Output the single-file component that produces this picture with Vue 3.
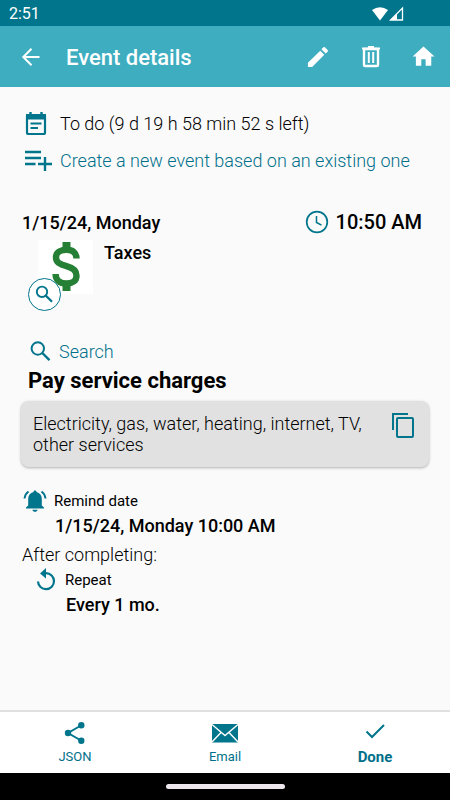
<script setup>
const statusLine = 'To do (9 d 19 h 58 min 52 s left)'
const note = 'Electricity, gas, water, heating, internet, TV, other services'
</script>

<template>
  <div class="screen">
    <div class="status">
      <span>2:51</span>
      <div class="signals">
        <svg width="18" height="14" viewBox="0 0 18 14"><path d="M0 3Q8-2.600 16 3L8 13.500Z" fill="#fff" /></svg>
        <svg width="14" height="14" viewBox="0 0 14 14"><path d="M12.500 1V13H0.500Z" fill="none" stroke="#fff" stroke-width="1.300" /><path d="M7 6.500V13H0.500Z" fill="#fff" /></svg>
      </div>
    </div>

    <header class="bar">
      <button class="icon-btn" aria-label="Back">
        <svg width="24" height="24" viewBox="0 0 24 24"><path d="M21.500 12H5M13.500 3.800L5.300 12L13.500 20.200" fill="none" stroke="#fff" stroke-width="2" /></svg>
      </button>
      <h1>Event details</h1>
      <div class="actions">
        <button class="icon-btn" aria-label="Edit">
          <svg width="26" height="26" viewBox="0 0 24 24"><path fill="#fff" d="M2.700 17.250V21.300h3.900L17.810 9.940l-3.750-3.750zM20.910 7.040a1 1 0 0 0 0-1.410l-2.540-2.540a1 1 0 0 0-1.410 0l-1.830 1.830 3.950 3.950 1.830-1.830z" /></svg>
        </button>
        <button class="icon-btn" aria-label="Delete">
          <svg width="26" height="26" viewBox="0 0 26 26"><path d="M4 4.500H22M10 3H16" fill="none" stroke="#fff" stroke-width="2.200" /><rect x="6" y="5" width="14" height="17" rx="1" fill="none" stroke="#fff" stroke-width="2.400" /><path d="M10.800 8V19M15.200 8V19" stroke="#fff" stroke-width="2" /></svg>
        </button>
        <button class="icon-btn" aria-label="Home">
          <svg width="26" height="26" viewBox="0 0 24 24"><path fill="#fff" d="M9.500 20v-6h4v6h5.200v-8.500h3L11.500 2.200 1.500 11.500h3v8.500z" /></svg>
        </button>
      </div>
    </header>

    <main class="content">
      <div class="line">
        <svg width="28" height="28" viewBox="0 0 28 28"><path d="M9.500 2V5M20.500 2V5" stroke="#00758c" stroke-width="2.400" /><rect x="6" y="5" width="18" height="19" rx="1.500" fill="none" stroke="#00758c" stroke-width="2.200" /><path d="M5 4H25V9.500H5Z" fill="#00758c" /><path d="M9.500 13.500H20.500M9.500 18H17" stroke="#00758c" stroke-width="2.200" /></svg>
        <span>{{ statusLine }}</span>
      </div>
      <a class="line link" href="#new">
        <svg width="28" height="28" viewBox="0 0 28 28"><path d="M4 5H20M4 11H20M4 17H14.500M17 17H31M24 10V24" fill="none" stroke="#00758c" stroke-width="2.400" /></svg>
        <span>Create a new event based on an existing one</span>
      </a>

      <div class="when">
        <strong>1/15/24, Monday</strong>
        <span class="time">
          <svg width="24" height="24" viewBox="0 0 24 24"><circle cx="12" cy="12" r="10.300" fill="none" stroke="#00758c" stroke-width="1.700" /><path d="M11.500 6V12.500L16.500 15.200" fill="none" stroke="#00758c" stroke-width="1.500" /></svg>
          <strong>10:50 AM</strong>
        </span>
      </div>

      <div class="category">
        <div class="thumb">
          <svg width="55" height="54" viewBox="0 0 55 54">
            <path d="M24.500 2H32.500V11H24.500ZM24.500 43H32.500V51H24.500Z" fill="#257f35" />
            <path d="M38.500 18.500C38.500 12.500 34.500 9.700 28.500 9.700C22.500 9.700 18 12.500 18 17.200C18 22.500 22 24.500 28.500 26.200C35.500 28 38.500 31 38.500 35.700C38.500 40.800 34.500 43.500 28.500 43.500C21.500 43.500 17.600 40 17.600 34" fill="none" stroke="#257f35" stroke-width="6.400" />
          </svg>
          <button class="zoom" aria-label="Zoom picture">
            <svg width="20" height="20" viewBox="0 0 20 20"><circle cx="7" cy="6.800" r="5.200" fill="none" stroke="#00758c" stroke-width="1.900" /><path d="M10.800 10.600L17 16.800" stroke="#00758c" stroke-width="2.200" /></svg>
          </button>
        </div>
        <strong>Taxes</strong>
      </div>

      <a class="search" href="#search">
        <svg width="22" height="22" viewBox="0 0 22 22"><circle cx="8.800" cy="8.500" r="6.200" fill="none" stroke="#00758c" stroke-width="2" /><path d="M13.300 13L20.500 20.200" stroke="#00758c" stroke-width="2.400" /></svg>
        <span>Search</span>
      </a>
      <h2>Pay service charges</h2>

      <section class="card">
        <p>{{ note }}</p>
        <button class="icon-btn" aria-label="Copy">
          <svg width="24" height="26" viewBox="0 0 24 26"><path d="M2 17V1H17" fill="none" stroke="#00758c" stroke-width="2" /><rect x="6" y="5" width="16" height="19" rx="1" fill="none" stroke="#00758c" stroke-width="2" /></svg>
        </button>
      </section>

      <div class="remind">
        <svg width="24" height="24" viewBox="0 0 24 24"><path d="M12 1.500C13 1.500 13.500 2 13.500 3C17 4 18.800 6.500 18.800 10V16.500L21 18.500V19.500H3V18.500L5.200 16.500V10C5.200 6.500 7 4 10.500 3C10.500 2 11 1.500 12 1.500ZM9.500 20.700H14.500C14.500 23.500 9.500 23.500 9.500 20.700Z" fill="#00758c" /><path d="M5.500 2.500Q2 5 1.500 9.500M18.500 2.500Q22 5 22.500 9.500" fill="none" stroke="#00758c" stroke-width="1.900" /></svg>
        <span>Remind date</span>
      </div>
      <strong class="remind-value">1/15/24, Monday 10:00 AM</strong>
      <p class="after">After completing:</p>
      <div class="repeat">
        <svg width="22" height="22" viewBox="0 0 22 22"><path d="M9 4.200H11A8 8 0 1 1 3 12.500" fill="none" stroke="#00758c" stroke-width="2.200" /><path d="M11 -1V9.500L5 4.500Z" fill="#00758c" /></svg>
        <span>Repeat</span>
      </div>
      <strong class="repeat-value">Every 1 mo.</strong>
    </main>

    <nav class="tabs">
      <button>
        <svg width="24" height="24" viewBox="0 0 24 24"><path d="M18 4.500L5 12L18 19.500" fill="none" stroke="#00758c" stroke-width="2" /><g fill="#00758c"><circle cx="18.300" cy="4.300" r="3.200" /><circle cx="5" cy="12" r="3.200" /><circle cx="18.300" cy="19.700" r="3.200" /></g></svg>
        <span>JSON</span>
      </button>
      <button>
        <svg width="28" height="24" viewBox="0 0 28 24"><rect x="1" y="3" width="26" height="18.500" fill="#00758c" /><path d="M1 3.500L14 14.500L27 3.500M1 21L10 11.500M27 21L18 11.500" fill="none" stroke="#fff" stroke-width="1.400" /></svg>
        <span>Email</span>
      </button>
      <button class="done">
        <svg width="24" height="24" viewBox="0 0 24 24"><path d="M3.500 10.500L9 16L21 4" fill="none" stroke="#00758c" stroke-width="2" /></svg>
        <span>Done</span>
      </button>
    </nav>
    <div class="gesture"><span></span></div>
  </div>
</template>

<style>
body {
  background: #fafafa;
}
</style>

<style scoped>
.screen {
  display: flex;
  flex-direction: column;
  min-height: 100vh;
  background: #fafafa;
  color: #000;
  font-family: Roboto, "Liberation Sans", sans-serif;
  font-size: 18px;
}
svg {
  display: block;
  flex: none;
  overflow: visible;
}
button {
  padding: 0;
  border: 0;
  background: none;
  font: inherit;
}
a {
  text-decoration: none;
}
h1, h2, p {
  margin: 0;
}
strong {
  font-weight: 500;
}
.status {
  display: flex;
  align-items: center;
  justify-content: space-between;
  height: 26px;
  padding: 1px 46px 0 9px;
  box-sizing: border-box;
  background: #00758c;
  color: #fff;
  font-size: 16px;
}
.signals {
  display: flex;
}
.bar {
  display: flex;
  align-items: center;
  height: 61px;
  padding: 0 13px 0 18px;
  background: #3eadbf;
  color: #fff;
}
h1 {
  margin-left: 24px;
  font-size: 22px;
  font-weight: 500;
  line-height: 30px;
  padding-top: 2px;
}
.actions {
  display: flex;
  gap: 27px;
  margin-left: auto;
}
.content {
  display: flex;
  flex: 1;
  flex-direction: column;
  padding: 18px 21px 0;
}
.line {
  display: flex;
  align-items: center;
  gap: 11px;
  height: 37px;
  color: #000;
  font-weight: 300;
}
.link, .search {
  color: #00708a;
}
.when {
  display: flex;
  align-items: center;
  justify-content: space-between;
  height: 28px;
  margin-top: 29px;
  padding: 0 7px 0 1px;
}
.time {
  display: flex;
  align-items: center;
  gap: 7px;
}
.time strong {
  font-size: 20px;
}
.category {
  display: flex;
  gap: 11px;
  margin-top: 4px;
  padding-left: 17px;
  line-height: 26px;
}
.thumb {
  position: relative;
  background: #fff;
}
.zoom {
  position: absolute;
  left: -10px;
  bottom: -17px;
  display: grid;
  place-items: center;
  width: 33px;
  height: 33px;
  border: 1px solid #00758c;
  border-radius: 50%;
  background: #fff;
}
.search {
  display: flex;
  align-items: center;
  gap: 8px;
  height: 24px;
  margin-top: 45px;
  padding-left: 8px;
  font-weight: 300;
}
h2 {
  margin-top: 4px;
  padding-left: 7px;
  font-size: 22px;
  font-weight: 700;
  line-height: 28px;
}
.card {
  display: flex;
  align-items: flex-start;
  justify-content: space-between;
  gap: 20px;
  margin-top: 6px;
  padding: 12px 14px 12px 12px;
  border-radius: 8px;
  background: #e1e1e1;
  box-shadow: 0 1px 3px rgba(0, 0, 0, 0.3);
  font-weight: 300;
  line-height: 21px;
}
.remind, .repeat {
  display: flex;
  align-items: center;
  font-size: 15px;
  font-weight: 400;
}
.remind {
  gap: 7px;
  height: 26px;
  margin-top: 21px;
  padding-left: 2px;
}
.remind-value {
  padding-left: 34px;
  line-height: 24px;
}
.after {
  margin-top: 5px;
  padding-left: 1px;
  font-weight: 300;
  line-height: 24px;
}
.repeat {
  gap: 8px;
  height: 26px;
  padding-left: 14px;
}
.repeat-value {
  padding-left: 45px;
  line-height: 24px;
}
.tabs {
  display: grid;
  grid-template-columns: repeat(3, 1fr);
  height: 61px;
  border-top: 2px solid #e0e0e0;
  background: #fff;
}
.tabs button {
  display: flex;
  flex-direction: column;
  align-items: center;
  gap: 3px;
  padding-top: 9px;
  color: #00708a;
  font-size: 13px;
  font-weight: 400;
  line-height: 18px;
}
.tabs .done {
  font-size: 15px;
  font-weight: 700;
}
.gesture {
  display: flex;
  align-items: center;
  justify-content: center;
  height: 27px;
  background: #000;
}
.gesture span {
  width: 119px;
  height: 5px;
  border-radius: 3px;
  background: #eee8ee;
}
</style>
